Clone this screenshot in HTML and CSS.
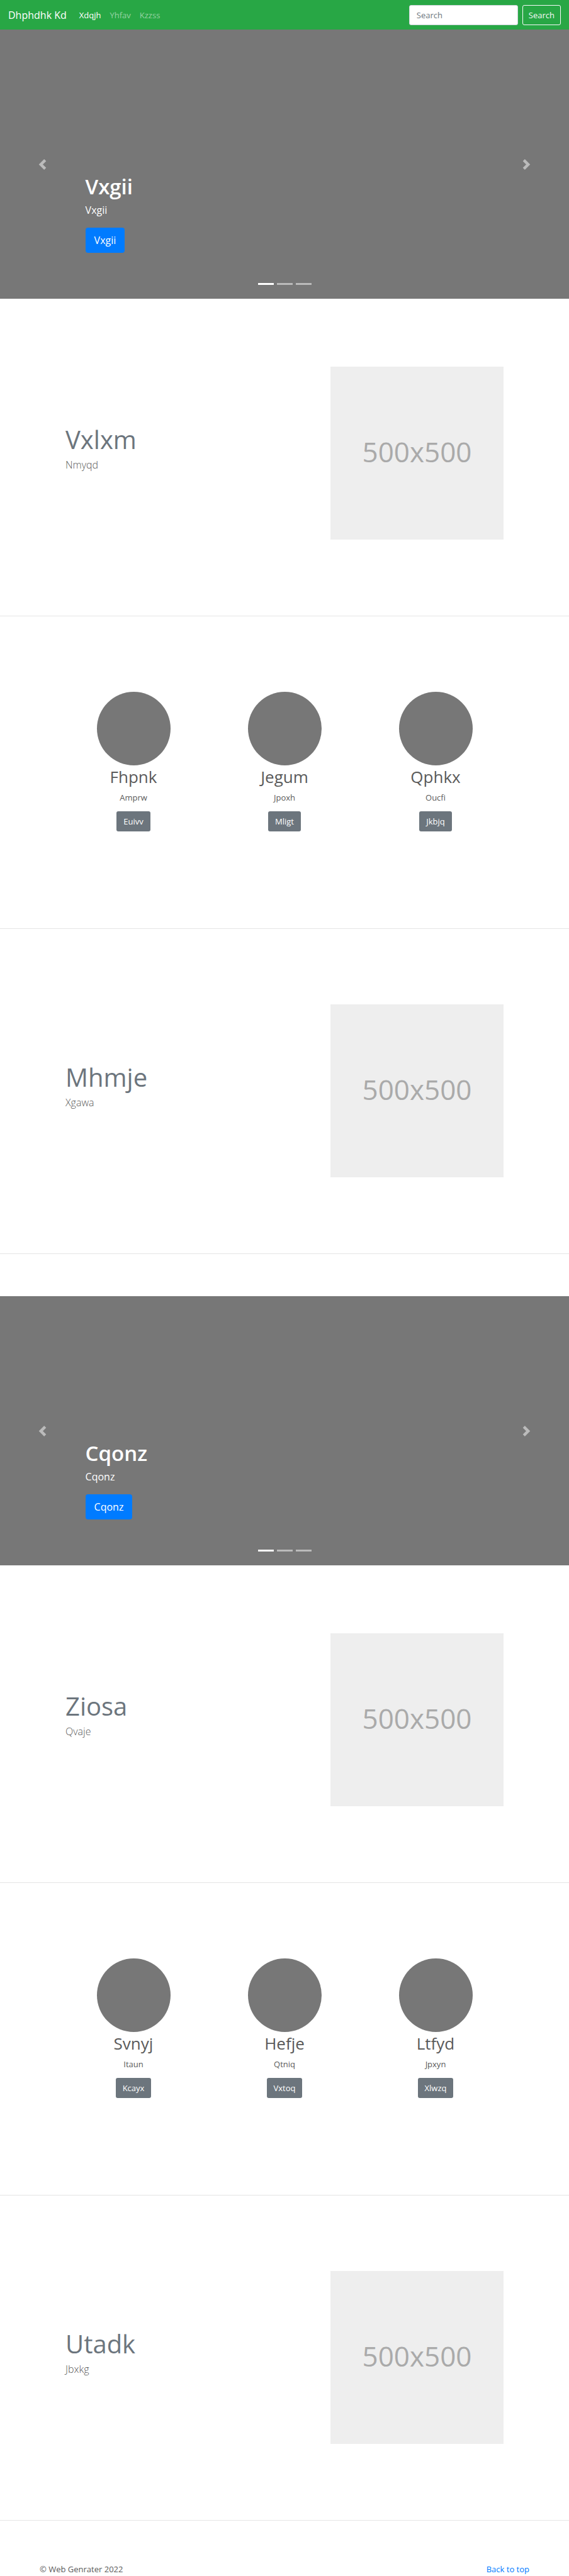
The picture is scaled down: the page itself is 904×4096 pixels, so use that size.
FILE: index.html
```html
<!DOCTYPE html>
<html lang="en">
<head>
<meta charset="utf-8">
<meta name="viewport" content="width=device-width, initial-scale=1">
<title>Dhphdhk Kd</title>
<link rel="stylesheet" href="styles.css">
</head>
<body>
<header class="navbar" id="top">
  <a class="brand" href="#top">Dhphdhk Kd</a>
  <nav class="nav-links">
    <a class="nav-link active" href="#">Xdqjh</a>
    <a class="nav-link" href="#">Yhfav</a>
    <a class="nav-link" href="#">Kzzss</a>
  </nav>
  <form class="search" role="search">
    <input class="search-input" type="search" placeholder="Search" aria-label="Search">
    <button class="search-button" type="submit">Search</button>
  </form>
</header>
<main>
  <section class="carousel">
    <button class="control" type="button" aria-label="Previous"><svg class="chevron" viewBox="0 0 8 8"><path d="M5.25 0l-4 4 4 4 1.5-1.5-2.5-2.5 2.5-2.5-1.5-1.5z"/></svg></button>
    <div class="caption">
      <h1 class="caption-title">Vxgii</h1>
      <p class="caption-text">Vxgii</p>
      <a class="btn-primary" href="#">Vxgii</a>
    </div>
    <button class="control" type="button" aria-label="Next"><svg class="chevron" viewBox="0 0 8 8"><path d="M2.75 0l-1.5 1.5 2.5 2.5-2.5 2.5 1.5 1.5 4-4-4-4z"/></svg></button>
    <div class="indicators"><span class="indicator current"></span><span class="indicator"></span><span class="indicator"></span></div>
  </section>
  <section class="featurette first">
    <div>
      <h2 class="featurette-title">Vxlxm</h2>
      <p class="lead">Nmyqd</p>
    </div>
    <div class="placeholder">500x500</div>
  </section>
  <hr class="divider">
  <section class="people">
    <div class="person"><div class="avatar"></div><h2 class="person-name">Fhpnk</h2><p class="person-text">Amprw</p><a class="btn-secondary" href="#">Euivv</a></div>
    <div class="person"><div class="avatar"></div><h2 class="person-name">Jegum</h2><p class="person-text">Jpoxh</p><a class="btn-secondary" href="#">Mligt</a></div>
    <div class="person"><div class="avatar"></div><h2 class="person-name">Qphkx</h2><p class="person-text">Oucfi</p><a class="btn-secondary" href="#">Jkbjq</a></div>
  </section>
  <hr class="divider">
  <section class="featurette">
    <div>
      <h2 class="featurette-title">Mhmje</h2>
      <p class="lead">Xgawa</p>
    </div>
    <div class="placeholder">500x500</div>
  </section>
  <hr class="divider spaced">
  <section class="carousel">
    <button class="control" type="button" aria-label="Previous"><svg class="chevron" viewBox="0 0 8 8"><path d="M5.25 0l-4 4 4 4 1.5-1.5-2.5-2.5 2.5-2.5-1.5-1.5z"/></svg></button>
    <div class="caption">
      <h1 class="caption-title">Cqonz</h1>
      <p class="caption-text">Cqonz</p>
      <a class="btn-primary" href="#">Cqonz</a>
    </div>
    <button class="control" type="button" aria-label="Next"><svg class="chevron" viewBox="0 0 8 8"><path d="M2.75 0l-1.5 1.5 2.5 2.5-2.5 2.5 1.5 1.5 4-4-4-4z"/></svg></button>
    <div class="indicators"><span class="indicator current"></span><span class="indicator"></span><span class="indicator"></span></div>
  </section>
  <section class="featurette first">
    <div>
      <h2 class="featurette-title">Ziosa</h2>
      <p class="lead">Qvaje</p>
    </div>
    <div class="placeholder">500x500</div>
  </section>
  <hr class="divider">
  <section class="people">
    <div class="person"><div class="avatar"></div><h2 class="person-name">Svnyj</h2><p class="person-text">Itaun</p><a class="btn-secondary" href="#">Kcayx</a></div>
    <div class="person"><div class="avatar"></div><h2 class="person-name">Hefje</h2><p class="person-text">Qtniq</p><a class="btn-secondary" href="#">Vxtoq</a></div>
    <div class="person"><div class="avatar"></div><h2 class="person-name">Ltfyd</h2><p class="person-text">Jpxyn</p><a class="btn-secondary" href="#">Xlwzq</a></div>
  </section>
  <hr class="divider">
  <section class="featurette">
    <div>
      <h2 class="featurette-title">Utadk</h2>
      <p class="lead">Jbxkg</p>
    </div>
    <div class="placeholder">500x500</div>
  </section>
  <hr class="divider spaced">
</main>
<footer class="footer">
  <span>© Web Genrater 2022</span>
  <a class="top-link" href="#top">Back to top</a>
</footer>
</body>
</html>
```
FILE: styles.css
```css
* { box-sizing: border-box; }

body {
  margin: 0;
  background: #fff;
  color: #5a5a5a;
  font: 400 13px/20px "Open Sans", "Noto Sans", sans-serif;
}

h1, h2, p { margin: 0; }
a { text-decoration: none; }

.navbar {
  display: flex;
  align-items: center;
  min-height: 47px;
  padding: 0 13px;
  background: #28a745;
}

.brand {
  margin-right: 13px;
  color: #fff;
  font-size: 16px;
  line-height: 24px;
}

.nav-links { display: flex; }

.nav-link {
  padding: 0 7px;
  color: rgba(255, 255, 255, 0.5);
}

.nav-link.active { color: #fff; }

.search {
  display: flex;
  gap: 7px;
  margin-left: auto;
}

.search-input {
  width: 173px;
  height: 32px;
  padding: 0 11px;
  border: 1px solid #ced4da;
  border-radius: 3px;
  background: #fff;
  color: #495057;
  font: inherit;
  appearance: none;
}

.search-input::placeholder { color: #6c757d; opacity: 1; }

.search-button {
  height: 32px;
  padding: 0 9px;
  border: 1px solid #f8f9fa;
  border-radius: 3px;
  background: transparent;
  color: #f8f9fa;
  font: inherit;
}

.carousel {
  position: relative;
  display: flex;
  height: 428px;
  background: #777;
}

.control {
  display: flex;
  align-items: center;
  justify-content: center;
  width: 15%;
  padding: 0;
  border: 0;
  background: none;
  opacity: 0.5;
}

.chevron { width: 17px; height: 17px; fill: #fff; }

.caption {
  display: flex;
  flex: 1;
  flex-direction: column;
  align-items: flex-start;
  justify-content: flex-end;
  padding-bottom: 73px;
  color: #fff;
}

.caption-title {
  margin-bottom: 5px;
  font-size: 33px;
  font-weight: 600;
  line-height: 40px;
}

.caption-text {
  margin-bottom: 15px;
  font-size: 16px;
  line-height: 25px;
}

.btn-primary {
  padding: 7px 14px;
  border-radius: 4px;
  background: #007bff;
  color: #fff;
  font-size: 16px;
  line-height: 26px;
}

.indicators {
  position: absolute;
  right: 0;
  bottom: 22px;
  left: 0;
  display: flex;
  gap: 5px;
  justify-content: center;
}

.indicator { width: 25px; height: 3px; background: #fff; opacity: 0.5; }
.indicator.current { opacity: 1; }

.featurette {
  display: grid;
  grid-template-columns: 1fr 275px;
  max-width: 696px;
  margin: 0 auto;
  padding: 120px 0 121px;
}

.featurette.first { padding-top: 108px; }

.featurette-title {
  margin: 91px 0 3px;
  color: #6c757d;
  font-size: 40px;
  font-weight: 400;
  line-height: 50px;
}

.lead {
  font-size: 16px;
  font-weight: 300;
  line-height: 25px;
}

.placeholder {
  display: flex;
  align-items: center;
  justify-content: center;
  aspect-ratio: 1;
  padding-bottom: 5px;
  background: #eee;
  color: #aaa;
  font-size: 44px;
  line-height: 60px;
}

.divider {
  height: 1px;
  margin: 0;
  border: 0;
  background: #e5e5e5;
}

.divider.spaced { margin-bottom: 67px; }

.people {
  display: grid;
  grid-template-columns: repeat(3, 1fr);
  max-width: 720px;
  margin: 0 auto;
  padding: 120px 0 154px;
}

.person {
  display: flex;
  flex-direction: column;
  align-items: center;
}

.avatar {
  width: 117px;
  height: 117px;
  border-radius: 50%;
  background: #777;
}

.person-name {
  margin: 2px 0 6px;
  font-size: 26px;
  font-weight: 400;
  line-height: 33px;
}

.person-text {
  margin-bottom: 12px;
  line-height: 20px;
}

.btn-secondary {
  padding: 6px 11px;
  border-radius: 3px;
  background: #6c757d;
  color: #fff;
}

.footer {
  display: flex;
  justify-content: space-between;
  max-width: 804px;
  margin: 0 auto;
  padding: 0 13px 1px;
}

.top-link { color: #007bff; }
```
